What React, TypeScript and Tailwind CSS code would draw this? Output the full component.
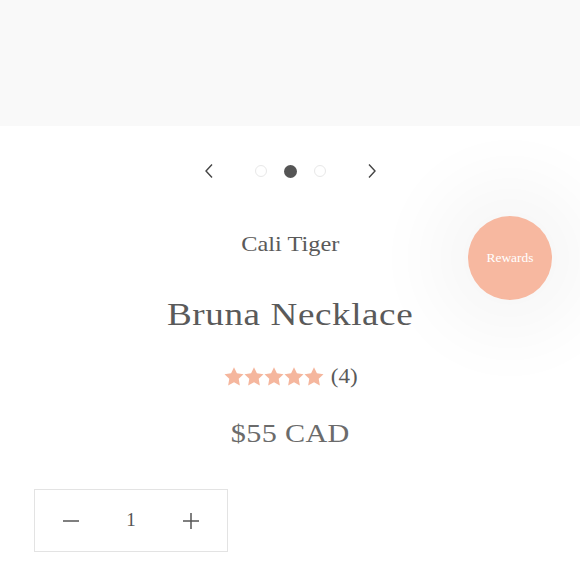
import React from 'react';

const serif = { fontFamily: '"Liberation Serif", "Times New Roman", serif' };

function Star() {
  return (
    <svg width="20" height="19" viewBox="0 0 24 23" className="fill-[#f5b69d]">
      <path d="M12 0.3l3.5 7.3 8 1.1-5.8 5.6 1.4 8L12 18.5l-7.1 3.8 1.4-8L0.5 8.7l8-1.1z" />
    </svg>
  );
}

function Chevron({ dir }: { dir: 'left' | 'right' }) {
  return (
    <svg width="10" height="16" viewBox="0 0 10 16" fill="none" stroke="#444" strokeWidth="1.4">
      {dir === 'left' ? <polyline points="8,1.5 2,8 8,14.5" /> : <polyline points="2,1.5 8,8 2,14.5" />}
    </svg>
  );
}

export default function App() {
  return (
    <div className="relative h-[580px] w-[580px] overflow-hidden bg-white" style={serif}>
      <div className="h-[126px] bg-[#f9f9f9]" />

      <div className="mt-[35px] flex h-[20px] items-center justify-center">
        <Chevron dir="left" />
        <div className="mx-[41px] flex items-center gap-[17px]">
          <span className="h-[12px] w-[12px] rounded-full border-[1.5px] border-[#e8e8e8]" />
          <span className="h-[13px] w-[13px] rounded-full bg-[#555]" />
          <span className="h-[12px] w-[12px] rounded-full border-[1.5px] border-[#e8e8e8]" />
        </div>
        <Chevron dir="right" />
      </div>

      <div className="mt-[49px] text-center text-[21px] leading-[28px] text-[#5a5a5a]">
        <span className="inline-block scale-x-[1.16]">Cali Tiger</span>
      </div>

      <h1 className="mt-[36px] text-center text-[32px] leading-[40px] text-[#5a5a5a]">
        <span className="inline-block scale-x-[1.16] tracking-[0.5px]">Bruna Necklace</span>
      </h1>

      <div className="mt-[32px] flex h-[20px] items-center justify-center gap-[8px]">
        <div className="flex">
          <Star />
          <Star />
          <Star />
          <Star />
          <Star />
        </div>
        <span className="inline-block scale-x-[1.1] text-[21px] leading-[20px] text-[#5a5a5a]">(4)</span>
      </div>

      <div className="mt-[32px] text-center text-[26px] leading-[32px] text-[#6b6b6b]">
        <span className="inline-block scale-x-[1.16] tracking-[0.3px]">$55 CAD</span>
      </div>

      <div className="ml-[34px] mt-[39px] flex h-[63px] w-[194px] items-center border border-[#e3e3e3]">
        <button className="flex h-full w-[72px] items-center justify-center">
          <svg width="18" height="18" viewBox="0 0 18 18" stroke="#555" strokeWidth="1.5">
            <line x1="1" y1="9" x2="17" y2="9" />
          </svg>
        </button>
        <span className="flex-1 text-center text-[19px] text-[#555]">1</span>
        <button className="flex h-full w-[72px] items-center justify-center">
          <svg width="18" height="18" viewBox="0 0 18 18" stroke="#555" strokeWidth="1.5">
            <line x1="1" y1="9" x2="17" y2="9" />
            <line x1="9" y1="1" x2="9" y2="17" />
          </svg>
        </button>
      </div>

      <div className="absolute left-[468px] top-[216px] flex h-[84px] w-[84px] items-center justify-center rounded-full bg-[#f7b8a0] text-[12px] text-white shadow-[0_0_70px_40px_rgba(0,0,0,0.035)]">
        <span className="inline-block scale-x-[1.12]">Rewards</span>
      </div>
    </div>
  );
}
